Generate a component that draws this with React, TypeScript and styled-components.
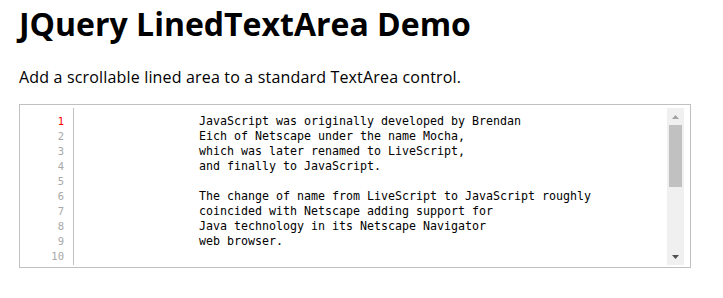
import React from "react";
import styled, { createGlobalStyle } from "styled-components";

const Global = createGlobalStyle`
  html, body { margin: 0; padding: 0; background: #fff; }
  body { font-family: "Open Sans", "Noto Sans", sans-serif; color: #000; }
`;

const Page = styled.div`
  padding: 4px 19px 0 19px;
  width: 672px;
`;

const Title = styled.h1`
  margin: 0;
  font-size: 32px;
  line-height: 40px;
  font-weight: 700;
  letter-spacing: 0;
`;

const Lead = styled.p`
  margin: 23px 0 0 0;
  font-size: 16px;
  line-height: 20px;
  letter-spacing: 0.17px;
`;

const Editor = styled.div`
  margin-top: 17px;
  display: flex;
  border: 1px solid #c0c0c0;
  padding: 3px 6px 2px 0;
  box-sizing: border-box;
  height: 164px;
`;

const Gutter = styled.div`
  width: 44px;
  border-right: 1px solid #c0c0c0;
  padding: 6px 9px 0 0;
  display: flex;
  flex-direction: column;
  align-items: flex-end;
  overflow: hidden;
`;

const LineNo = styled.div<{ $active?: boolean }>`
  font-family: "DejaVu Sans Mono", "Liberation Mono", monospace;
  font-size: 10.5px;
  line-height: 15px;
  height: 15px;
  color: ${(p) => (p.$active ? "#ff0000" : "#a8a8a8")};
`;

const Content = styled.div`
  flex: 1;
  padding: 6px 0 0 125px;
  overflow: hidden;
`;

const TextLine = styled.div`
  font-family: "DejaVu Sans Mono", "Liberation Mono", monospace;
  font-size: 11.63px;
  line-height: 15px;
  height: 15px;
  white-space: pre;
  color: #000;
`;

const Scrollbar = styled.div`
  width: 17px;
  background: #f0f0f0;
  display: flex;
  flex-direction: column;
`;

const ArrowBox = styled.div`
  height: 17px;
  display: flex;
  align-items: center;
  justify-content: center;
`;

const Track = styled.div`
  flex: 1;
  display: flex;
  flex-direction: column;
  padding: 0 2px;
`;

const Thumb = styled.div`
  height: 62px;
  background: #c1c1c1;
`;

const lines = [
  "JavaScript was originally developed by Brendan",
  "Eich of Netscape under the name Mocha,",
  "which was later renamed to LiveScript,",
  "and finally to JavaScript.",
  "",
  "The change of name from LiveScript to JavaScript roughly",
  "coincided with Netscape adding support for",
  "Java technology in its Netscape Navigator",
  "web browser.",
  "",
];

export default function App() {
  return (
    <>
      <Global />
      <Page>
        <Title>JQuery LinedTextArea Demo</Title>
        <Lead>Add a scrollable lined area to a standard TextArea control.</Lead>
        <Editor>
          <Gutter>
            {lines.map((_, i) => (
              <LineNo key={i} $active={i === 0}>
                {i + 1}
              </LineNo>
            ))}
          </Gutter>
          <Content>
            {lines.map((l, i) => (
              <TextLine key={i}>{l || " "}</TextLine>
            ))}
          </Content>
          <Scrollbar>
            <ArrowBox>
              <svg width="7" height="4" viewBox="0 0 7 4">
                <polygon points="3.5,0 7,4 0,4" fill="#a3a3a3" />
              </svg>
            </ArrowBox>
            <Track>
              <Thumb />
            </Track>
            <ArrowBox>
              <svg width="7" height="4" viewBox="0 0 7 4">
                <polygon points="0,0 7,0 3.5,4" fill="#505050" />
              </svg>
            </ArrowBox>
          </Scrollbar>
        </Editor>
      </Page>
    </>
  );
}
